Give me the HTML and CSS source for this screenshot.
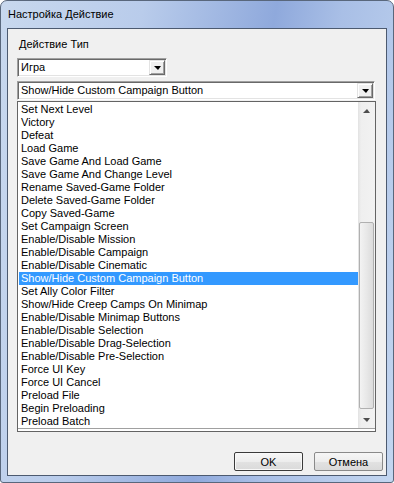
FILE: index.html
```html
<!DOCTYPE html>
<html>
  <head>
    <meta charset="utf-8" />
    <title>Настройка Действие</title>
    <link rel="stylesheet" href="styles.css">
  </head>
  <body>
    <div class="window">
      <div class="titlebar">Настройка Действие</div>

      <div class="client">
        <div class="label">Действие Тип</div>

        <!-- action type combo -->
        <div class="combo combo-type">
          <span class="combo-text">Игра</span>
          <span class="combo-btn"><i class="arrow-down"></i></span>
        </div>

        <!-- action combo, opened -->
        <div class="combo combo-action">
          <span class="combo-text">Show/Hide Custom Campaign Button</span>
          <span class="combo-btn"><i class="arrow-down"></i></span>
        </div>

        <div class="dropdown">
          <div class="dropdown-inner">
            <ul class="items">
              <li>Set Next Level</li>
              <li>Victory</li>
              <li>Defeat</li>
              <li>Load Game</li>
              <li>Save Game And Load Game</li>
              <li>Save Game And Change Level</li>
              <li>Rename Saved-Game Folder</li>
              <li>Delete Saved-Game Folder</li>
              <li>Copy Saved-Game</li>
              <li>Set Campaign Screen</li>
              <li>Enable/Disable Mission</li>
              <li>Enable/Disable Campaign</li>
              <li>Enable/Disable Cinematic</li>
              <li class="selected">Show/Hide Custom Campaign Button</li>
              <li>Set Ally Color Filter</li>
              <li>Show/Hide Creep Camps On Minimap</li>
              <li>Enable/Disable Minimap Buttons</li>
              <li>Enable/Disable Selection</li>
              <li>Enable/Disable Drag-Selection</li>
              <li>Enable/Disable Pre-Selection</li>
              <li>Force UI Key</li>
              <li>Force UI Cancel</li>
              <li>Preload File</li>
              <li>Begin Preloading</li>
              <li>Preload Batch</li>
            </ul>

            <div class="scrollbar">
              <div class="sb-btn"><i class="sb-up"></i></div>
              <div class="sb-track">
                <div class="sb-thumb"></div>
              </div>
              <div class="sb-btn"><i class="sb-down"></i></div>
            </div>
          </div>
        </div>

        <div class="buttons">
          <button class="btn btn-default" type="button">OK</button>
          <button class="btn" type="button">Отмена</button>
        </div>
      </div>
    </div>
  </body>
</html>
```

FILE: styles.css
```css
/* Windows 7 style dialog */
body {
  margin: 0;
  padding: 0;
  font-family: "Liberation Sans", Arial, sans-serif;
  font-size: 11px;
  background-color: #fff;
}
.window {
  width: 394px;
  height: 483px;
  box-sizing: border-box;
  border: 1px solid #59677c;
  border-radius: 7px 7px 3px 3px;
  background: linear-gradient(100deg, #c8d8ee 0%, #b9cceb 30%, #8fa9dc 58%, #a9bfe6 72%, #c3d6f0 100%);
  overflow: hidden;
}
.titlebar {
  height: 27px;
  line-height: 27px;
  padding-left: 7px;
  color: #000;
}
.client {
  width: 380px;
  height: 448px;
  box-sizing: border-box;
  margin-left: 6px;
  border: 1px solid #4c5a70;
  background-color: #f0f0f0;
}
.label {
  margin: 9px 0 0 11px;
  line-height: 13px;
}

/* combo boxes */
.combo {
  display: flex;
  height: 19px;
  box-sizing: border-box;
  margin-left: 9px;
  border: 1px solid;
  border-color: #a0a0a0 #fff #fff #a0a0a0;
  box-shadow: inset 1px 1px #696969, inset -1px -1px #e3e3e3;
  background-color: #fff;
  padding: 1px;
}
.combo-type {
  width: 150px;
  margin-top: 7px;
}
.combo-action {
  width: 358px;
  margin-top: 4px;
}
.combo-text {
  flex: 1;
  line-height: 15px;
  padding-left: 2px;
}
.combo-btn {
  width: 16px;
  height: 15px;
  box-sizing: border-box;
  border: 1px solid;
  border-color: #e3e3e3 #696969 #696969 #e3e3e3;
  box-shadow: inset 1px 1px #fff, inset -1px -1px #a0a0a0;
  background-color: #f0f0f0;
  display: flex;
  align-items: center;
  justify-content: center;
}
.arrow-down {
  width: 0;
  height: 0;
  border-left: 4px solid transparent;
  border-right: 3px solid transparent;
  border-top: 4px solid #000;
  margin-top: 1px;
}

/* opened list */
.dropdown {
  width: 359px;
  height: 331px;
  box-sizing: border-box;
  margin: 1px 0 0 9px;
  border: 1px solid #646464;
  background-color: #fff;
}
.dropdown-inner {
  display: flex;
  height: 327px;
  border-bottom: 1px solid #a0a0a0;
  box-sizing: border-box;
}
.items {
  flex: 1;
  list-style: none;
  margin: 0;
  padding: 1px 0 0 1px;
  overflow: hidden;
}
.items li {
  height: 13px;
  line-height: 13px;
  padding-left: 2px;
  white-space: nowrap;
  color: #000;
}
.items li.selected {
  background-color: #3399ff;
  color: #fff;
}

/* scrollbar */
.scrollbar {
  width: 17px;
  display: flex;
  flex-direction: column;
  background: linear-gradient(to right, #e2e2e2, #efefef 3px, #f2f2f2);
}
.sb-btn {
  height: 17px;
  display: flex;
  align-items: center;
  justify-content: center;
}
.sb-up {
  width: 0;
  height: 0;
  border-left: 4px solid transparent;
  border-right: 3px solid transparent;
  border-bottom: 4px solid #4d4d4d;
}
.sb-down {
  width: 0;
  height: 0;
  border-left: 4px solid transparent;
  border-right: 3px solid transparent;
  border-top: 4px solid #4d4d4d;
}
.sb-track {
  flex: 1;
  padding: 103px 1px 0 1px;
}
.sb-thumb {
  height: 187px;
  box-sizing: border-box;
  border: 1px solid #b0b0b0;
  border-radius: 2px;
  background: linear-gradient(to right, #f3f3f3, #e8e8e8 50%, #dcdcdc);
}

/* dialog buttons */
.buttons {
  display: flex;
  justify-content: flex-end;
  gap: 11px;
  margin-top: 20px;
  padding-right: 3px;
}
.btn {
  width: 69px;
  height: 19px;
  padding: 0;
  font-family: "Liberation Sans", Arial, sans-serif;
  font-size: 11px;
  color: #000;
  border: 1px solid #8a8a8a;
  border-radius: 2px;
  background: linear-gradient(#f6f6f6, #ededed 50%, #e2e2e2 51%, #dadada);
}
.btn-default {
  border-color: #3a3a3a;
  box-shadow: inset 0 0 0 1px #f8f8f8;
}
```
